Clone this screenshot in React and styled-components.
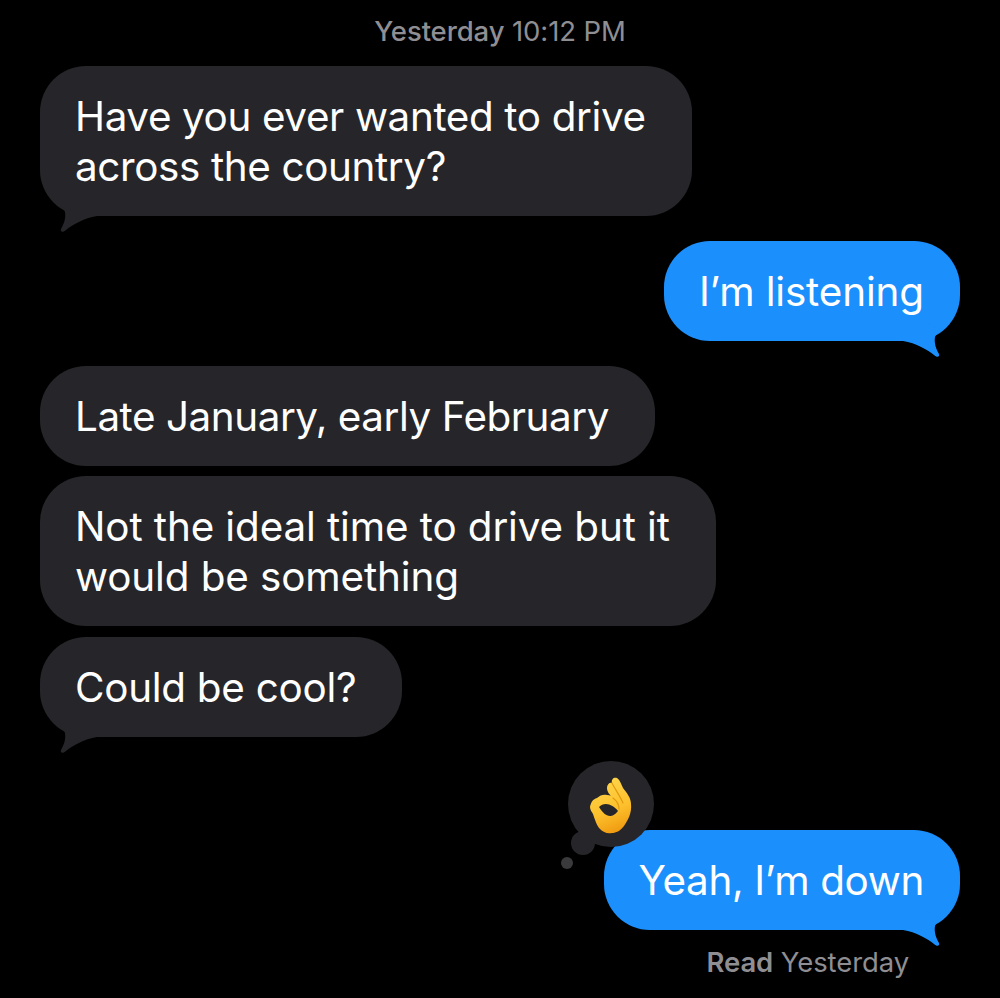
import React from "react";
import styled, { createGlobalStyle } from "styled-components";

const Global = createGlobalStyle`
  html, body { margin: 0; padding: 0; background: #000; }
  body { width: 1000px; height: 998px; overflow: hidden; font-family: Inter, "Liberation Sans", sans-serif; }
`;

const Thread = styled.main`
  width: 1000px;
  height: 998px;
  box-sizing: border-box;
  padding: 0 40px;
  display: flex;
  flex-direction: column;
  background: #000;
`;

const Stamp = styled.div`
  height: 66px;
  box-sizing: border-box;
  padding-top: 15px;
  text-align: center;
  font-size: 27.5px;
  line-height: 32px;
  color: #8e8e93;
  font-weight: 400;
  letter-spacing: -0.1px;
  & b { font-weight: 500; }
`;

const Row = styled.div`
  display: flex;
  justify-content: ${(p) => (p.$me ? "flex-end" : "flex-start")};
  margin-top: ${(p) => p.$top || 0}px;
`;

const Bubble = styled.div`
  position: relative;
  box-sizing: border-box;
  padding: 26px ${(p) => (p.$me ? 36 : 46)}px 24px 35px;
  border-radius: 46px;
  font-size: 40.4px;
  line-height: 50px;
  letter-spacing: ${(p) => p.$track}px;
  color: #fff;
  white-space: pre-line;
  background: ${(p) => (p.$me ? "#1b8ffc" : "#26262a")};
`;

const Tail = styled.svg`
  position: absolute;
  bottom: -18px;
  width: 60px;
  height: 40px;
  ${(p) => (p.$me ? "right: 0;" : "left: 0; transform: scaleX(-1);")}
`;

const Receipt = styled.div`
  margin-top: 16px;
  padding-right: 51px;
  text-align: right;
  font-size: 27.5px;
  line-height: 32px;
  color: #8e8e93;
  letter-spacing: -0.1px;
  & b { font-weight: 600; }
`;

const Reaction = styled.svg`
  position: absolute;
  left: -44px;
  top: -60px;
  width: 100px;
  height: 106px;
  overflow: visible;
`;

const BubbleTail = ({ me }) => (
  <Tail $me={me} viewBox="0 0 60 40" fill={me ? "#1b8ffc" : "#26262a"}>
    <path d="M3 22 C16 24 28 31 34 36 C37 39 40 38 39 35 C36 30 34 24 35 18 C36 15 38 12 40 10 L20 0 Z" />
  </Tail>
);

const OkHand = () => (
  <Reaction viewBox="0 0 100 106">
    <defs>
      <linearGradient id="hand" x1="0.3" y1="0" x2="0.6" y2="1">
        <stop offset="0" stopColor="#ffd64d" />
        <stop offset="0.6" stopColor="#fdc02c" />
        <stop offset="1" stopColor="#ef9a10" />
      </linearGradient>
    </defs>
    <circle cx="7" cy="93" r="6" fill="#3a3a3c" />
    <circle cx="23" cy="73" r="12" fill="#26262a" />
    <circle cx="51" cy="34" r="43" fill="#26262a" />
    <path
      fill="url(#hand)"
      d="M30 37 C31 32 33 29 37 28 C40 25 44 24 47 25 C50 25 52 26 53 28 C50 25 47 22 47 18 C47 14 50 12 52 13 C51 9 54 7 57 8 C60 10 61 14 63 18 C67 23 71 28 71 34 C72 43 68 50 64 56 C60 61 56 63 52 63 C47 64 43 62 40 59 C37 56 35 50 33 44 C32 42 30 40 30 37 Z"
    />
    <path
      fill="#26262a"
      d="M39 37 C41 35 43 34 46 34 C50 34 55 37 58 41 C55 45 52 46 50 46 C46 46 42 42 39 37 Z"
    />
    <path
      fill="none"
      stroke="#e29a10"
      strokeWidth="1.2"
      strokeLinecap="round"
      d="M52 13 C55 19 60 26 63 33 M53 28 C57 31 59 35 59 39"
    />
  </Reaction>
);

export default function App() {
  return (
    <>
      <Global />
      <Thread>
        <Stamp>
          <b>Yesterday</b> 10:12 PM
        </Stamp>
        <Row>
          <Bubble $track={-0.37}>
            {"Have you ever wanted to drive\nacross the country?"}
            <BubbleTail />
          </Bubble>
        </Row>
        <Row $me $top={25}>
          <Bubble $me $track={-0.13}>
            I’m listening
            <BubbleTail me />
          </Bubble>
        </Row>
        <Row $top={25}>
          <Bubble $track={-0.45}>Late January, early February</Bubble>
        </Row>
        <Row $top={10}>
          <Bubble $track={-0.11}>{"Not the ideal time to drive but it\nwould be something"}</Bubble>
        </Row>
        <Row $top={11}>
          <Bubble $track={-0.27}>
            Could be cool?
            <BubbleTail />
          </Bubble>
        </Row>
        <Row $me $top={93}>
          <Bubble $me $track={-0.34}>
            <OkHand />
            Yeah, I’m down
            <BubbleTail me />
          </Bubble>
        </Row>
        <Receipt>
          <b>Read</b> Yesterday
        </Receipt>
      </Thread>
    </>
  );
}
